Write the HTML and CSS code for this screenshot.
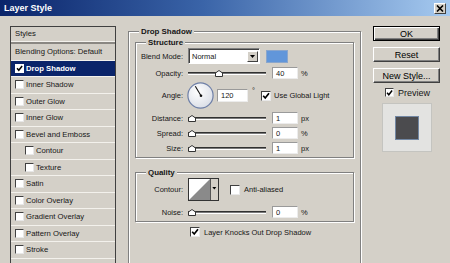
FILE: index.html
```html
<!DOCTYPE html>
<html>
<head>
<meta charset="utf-8">
<title>Layer Style</title>
<link rel="stylesheet" href="styles.css">
</head>
<body>
<div class="titlebar">
  <span class="title">Layer Style</span>
  <span class="close"><svg width="8" height="7" viewBox="0 0 8 7"><path d="M1 0.5 L7 6.5 M7 0.5 L1 6.5" stroke="#000" stroke-width="1.6"/></svg></span>
</div>
<div class="main">
  <div class="list">
    <div class="item head">Styles</div>
    <div class="item">Blending Options: Default</div>
    <div class="item sel"><span class="cb on"><svg width="7" height="7" viewBox="0 0 8 8"><path d="M1.2 3.8 L3.2 6 L7 1.2" fill="none" stroke="#000" stroke-width="1.7"/></svg></span>Drop Shadow</div>
    <div class="item"><span class="cb"></span>Inner Shadow</div>
    <div class="item"><span class="cb"></span>Outer Glow</div>
    <div class="item"><span class="cb"></span>Inner Glow</div>
    <div class="item"><span class="cb"></span>Bevel and Emboss</div>
    <div class="item sub"><span class="cb"></span>Contour</div>
    <div class="item sub"><span class="cb"></span>Texture</div>
    <div class="item"><span class="cb"></span>Satin</div>
    <div class="item"><span class="cb"></span>Color Overlay</div>
    <div class="item"><span class="cb"></span>Gradient Overlay</div>
    <div class="item"><span class="cb"></span>Pattern Overlay</div>
    <div class="item"><span class="cb"></span>Stroke</div>
  </div>

  <div class="grp outer">
    <span class="legend">Drop Shadow</span>
    <div class="grp structure">
      <span class="legend">Structure</span>
      <div class="row blend">
        <span class="lbl">Blend Mode:</span>
        <div class="select"><span class="val">Normal</span><span class="drop"><svg width="5" height="3" viewBox="0 0 5 3"><path d="M0 0 H5 L2.5 3 Z" fill="#000"/></svg></span></div>
        <span class="swatch"></span>
      </div>
      <div class="row">
        <span class="lbl">Opacity:</span>
        <div class="slider"><span class="track"></span><svg class="thumb" style="left:27px" width="8" height="7" viewBox="0 0 8 7"><path d="M0.5 6.5 V3 L4 0.5 L7.5 3 V6.5 Z" fill="#fff" stroke="#333"/></svg></div>
        <span class="inp">40</span><span class="unit">%</span>
      </div>
      <div class="row angle">
        <span class="lbl">Angle:</span>
        <svg class="dial" width="27" height="27" viewBox="0 0 27 27">
          <defs><radialGradient id="dg" cx="0.4" cy="0.35" r="0.7"><stop offset="0" stop-color="#ffffff"/><stop offset="1" stop-color="#d9dde6"/></radialGradient></defs>
          <circle cx="13.5" cy="13.5" r="12.6" fill="url(#dg)" stroke="#6f80a8" stroke-width="1.2"/>
          <path d="M14 13.8 L8.3 4.3" stroke="#111" stroke-width="1.1"/>
          <circle cx="14" cy="13.8" r="1.3" fill="#111"/>
        </svg>
        <span class="inp wide">120</span><span class="deg">°</span>
        <span class="cb on gl"><svg width="8" height="8" viewBox="0 0 8 8"><path d="M1.2 3.8 L3.2 6 L7 1.2" fill="none" stroke="#000" stroke-width="1.7"/></svg></span><span class="cbt">Use Global Light</span>
      </div>
      <div class="row">
        <span class="lbl">Distance:</span>
        <div class="slider"><span class="track"></span><svg class="thumb" style="left:0px" width="8" height="7" viewBox="0 0 8 7"><path d="M0.5 6.5 V3 L4 0.5 L7.5 3 V6.5 Z" fill="#fff" stroke="#333"/></svg></div>
        <span class="inp">1</span><span class="unit">px</span>
      </div>
      <div class="row">
        <span class="lbl">Spread:</span>
        <div class="slider"><span class="track"></span><svg class="thumb" style="left:0px" width="8" height="7" viewBox="0 0 8 7"><path d="M0.5 6.5 V3 L4 0.5 L7.5 3 V6.5 Z" fill="#fff" stroke="#333"/></svg></div>
        <span class="inp">0</span><span class="unit">%</span>
      </div>
      <div class="row">
        <span class="lbl">Size:</span>
        <div class="slider"><span class="track"></span><svg class="thumb" style="left:0px" width="8" height="7" viewBox="0 0 8 7"><path d="M0.5 6.5 V3 L4 0.5 L7.5 3 V6.5 Z" fill="#fff" stroke="#333"/></svg></div>
        <span class="inp">1</span><span class="unit">px</span>
      </div>
    </div>

    <div class="grp quality">
      <span class="legend">Quality</span>
      <div class="row contour">
        <span class="lbl">Contour:</span>
        <svg class="picker" width="31" height="23" viewBox="0 0 31 23">
          <rect x="0.5" y="0.5" width="30" height="22" fill="#fff" stroke="#333"/>
          <path d="M1 22 L22 1 V22 Z" fill="#8a8a8a"/>
          <rect x="22.5" y="1" width="7.5" height="21" fill="#d4d0c8"/>
          <path d="M22.5 1 V22" stroke="#555" stroke-width="1"/>
          <path d="M24.3 9 H28.3 L26.3 11.5 Z" fill="#000"/>
        </svg>
        <span class="cb aa"></span><span class="cbt">Anti-aliased</span>
      </div>
      <div class="row noise">
        <span class="lbl">Noise:</span>
        <div class="slider"><span class="track"></span><svg class="thumb" style="left:0px" width="8" height="7" viewBox="0 0 8 7"><path d="M0.5 6.5 V3 L4 0.5 L7.5 3 V6.5 Z" fill="#fff" stroke="#333"/></svg></div>
        <span class="inp">0</span><span class="unit">%</span>
      </div>
    </div>

    <div class="knock">
      <span class="cb on"><svg width="8" height="8" viewBox="0 0 8 8"><path d="M1.2 3.8 L3.2 6 L7 1.2" fill="none" stroke="#000" stroke-width="1.7"/></svg></span><span class="cbt">Layer Knocks Out Drop Shadow</span>
    </div>
  </div>

  <div class="side">
    <div class="btn default">OK</div>
    <div class="btn">Reset</div>
    <div class="btn">New Style...</div>
    <div class="prev">
      <span class="cb on"><svg width="8" height="8" viewBox="0 0 8 8"><path d="M1.2 3.8 L3.2 6 L7 1.2" fill="none" stroke="#000" stroke-width="1.7"/></svg></span><span class="prevt">Preview</span>
    </div>
    <div class="pbox"><span class="psq"></span></div>
  </div>
</div>
</body>
</html>
```

FILE: styles.css
```css
* { box-sizing: border-box; }
html, body { margin: 0; padding: 0; }
body {
  width: 450px;
  height: 263px;
  overflow: hidden;
  background: #d4d0c8;
  font-family: "Liberation Sans", Arial, sans-serif;
  color: #161616;
}

.titlebar {
  height: 16px;
  display: flex;
  align-items: center;
  justify-content: space-between;
  padding: 0 4px;
  background: linear-gradient(to right, #0a246a 0%, #3a64a8 45%, #a6caf0 100%);
}
.title { color: #fff; font-weight: bold; font-size: 9px; line-height: 16px; }
.close {
  width: 12px;
  height: 11px;
  background: #d4d0c8;
  border: 1px solid;
  border-color: #fff #404040 #404040 #fff;
  display: flex;
  align-items: center;
  justify-content: center;
}

.main {
  display: flex;
  align-items: flex-start;
  height: 247px;
  overflow: hidden;
  padding: 10px 0 0 10px;
}

/* left list */
.list {
  flex: none;
  width: 106px;
  height: 238px;
  border: 1px solid #404040;
  border-bottom: none;
  margin-right: 12px;
  font-size: 7.7px;
  overflow: hidden;
}
.item {
  height: 16.5px;
  display: flex;
  align-items: center;
  padding-left: 4px;
  border-bottom: 1px solid #f3f1ec;
  white-space: nowrap;
}
.item.head {
  height: 17px;
  padding-bottom: 2px;
  border-bottom: 2px solid #8a8782;
  box-shadow: inset 0 -1px 0 #f3f1ec;
}
.item.sub { padding-left: 14px; }
.item.sel { background: #0a246a; color: #fff; font-weight: bold; }

.cb {
  flex: none;
  width: 9px;
  height: 9px;
  margin-right: 2px;
  background: #fff;
  border: 1px solid;
  border-color: #404040 #e8e8e8 #e8e8e8 #404040;
  display: flex;
  align-items: center;
  justify-content: center;
}
.item.sel .cb { border-color: #fff; }

/* group boxes */
.grp {
  position: relative;
  border: 1px solid #808080;
  box-shadow: inset 1px 1px 0 #fff, 1px 1px 0 #fff;
}
.legend {
  position: absolute;
  top: -6px;
  left: 10px;
  padding: 0 2px;
  background: #d4d0c8;
  font-weight: bold;
  font-size: 7.9px;
  line-height: 11px;
  white-space: nowrap;
}
.outer {
  flex: none;
  width: 233px;
  height: 236px;
  border-bottom: none;
  margin-top: 5px;
  padding: 10px 6px 0;
}
.structure { height: 116px; padding-top: 5px; }
.quality { height: 50px; margin-top: 14px; padding-top: 5px; }

.row {
  display: flex;
  align-items: center;
  height: 12px;
  margin-top: 3px;
  font-size: 7.5px;
  white-space: nowrap;
}
.row.blend { height: 16px; margin-top: 0; }
.row.angle { height: 27px; }
.row.contour { height: 23px; margin-top: 0; }
.row.noise { margin-top: 5px; }

.lbl {
  flex: none;
  width: 47px;
  margin-right: 5px;
  text-align: right;
}

.select {
  flex: none;
  width: 72px;
  height: 16px;
  display: flex;
  background: #fff;
  border: 1px solid;
  border-color: #808080 #fff #fff #808080;
  box-shadow: inset 1px 1px 0 #404040;
}
.select .val { flex: 1; display: flex; align-items: center; padding-left: 3px; }
.select .drop {
  width: 11px;
  margin: 2px 1px 1px 0;
  background: #d4d0c8;
  border: 1px solid;
  border-color: #fff #404040 #404040 #fff;
  display: flex;
  align-items: center;
  justify-content: center;
}
.swatch {
  flex: none;
  width: 22px;
  height: 13px;
  margin-left: 6px;
  background: #6196da;
  border: 1px solid #8aa6cc;
}

.slider {
  flex: none;
  position: relative;
  width: 78px;
  height: 12px;
  display: flex;
  align-items: center;
}
.track {
  flex: 1;
  height: 3px;
  border-top: 1px solid #303030;
  background: #7a7a7a;
  border-bottom: 1px solid #fff;
}
.thumb { position: absolute; top: 3px; }

.inp {
  flex: none;
  width: 26px;
  height: 12px;
  margin-left: 6px;
  padding-left: 3px;
  display: flex;
  align-items: center;
  background: #fff;
  border: 1px solid;
  border-color: #9a9a9a #ececec #ececec #9a9a9a;
}
.inp.wide { width: 31px; height: 13px; margin-left: 3px; }
.unit { margin-left: 3px; }

.dial { flex: none; margin-left: -1px; }
.deg { margin-left: 4px; align-self: flex-start; margin-top: 4px; }
.cb.gl { width: 10px; height: 10px; margin-left: 6px; margin-right: 3px; }
.cb.aa { width: 10px; height: 10px; margin-left: 11px; margin-right: 4px; }
.picker { flex: none; }

.knock {
  display: flex;
  align-items: center;
  height: 10px;
  margin-top: 5px;
  padding-left: 55px;
  font-size: 7.5px;
  white-space: nowrap;
}
.knock .cb { width: 10px; height: 10px; margin-right: 4px; }

/* right column */
.side {
  flex: none;
  width: 67px;
  margin-left: 12px;
  display: flex;
  flex-direction: column;
}
.btn {
  height: 15px;
  display: flex;
  align-items: center;
  justify-content: center;
  font-size: 9px;
  color: #000;
  background: #d4d0c8;
  border: 1px solid;
  border-color: #fff #404040 #404040 #fff;
  box-shadow: inset -1px -1px 0 #808080;
}
.btn + .btn { margin-top: 6px; }
.btn.default {
  border-color: #000;
  box-shadow: inset 1px 1px 0 #fff, inset -1px -1px 0 #404040, inset -2px -2px 0 #808080;
}
.prev {
  display: flex;
  align-items: center;
  height: 9px;
  margin-top: 5px;
  padding-left: 12px;
}
.prev .cb { width: 9px; height: 9px; margin-right: 4px; }
.prevt { font-size: 9px; }
.pbox {
  width: 50px;
  height: 49px;
  margin-top: 6px;
  margin-left: 9px;
  background: #e3e3e1;
  border: 1px solid #c4c4c0;
  display: flex;
  align-items: center;
  justify-content: center;
}
.psq {
  width: 24px;
  height: 24px;
  background: #4b4b4e;
  border: 1px solid #7287a3;
}
```
